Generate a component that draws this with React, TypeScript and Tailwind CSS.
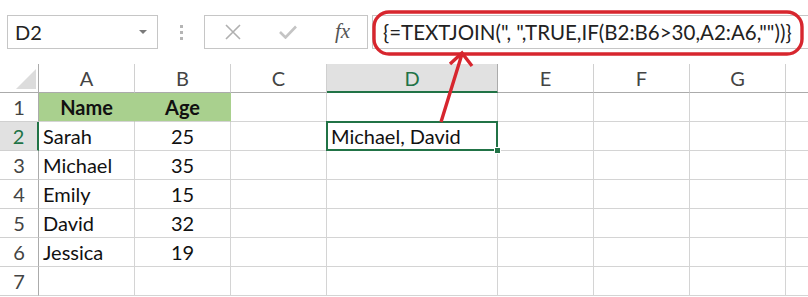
import React from "react";

const cols = [
  { key: "A", w: "w-[96px]" },
  { key: "B", w: "w-[96px]" },
  { key: "C", w: "w-[96px]" },
  { key: "D", w: "w-[171px]" },
  { key: "E", w: "w-[96px]" },
  { key: "F", w: "w-[96px]" },
  { key: "G", w: "w-[96px]" },
  { key: "", w: "w-[96px]" },
];

const data: Record<number, Record<string, string>> = {
  1: { A: "Name", B: "Age" },
  2: { A: "Sarah", B: "25", D: "Michael, David" },
  3: { A: "Michael", B: "35" },
  4: { A: "Emily", B: "15" },
  5: { A: "David", B: "32" },
  6: { A: "Jessica", B: "19" },
  7: {},
};

const Toolbar = () => (
  <div className="flex h-[64px] pt-[15px] pl-[7px]">
    <div className="flex h-[34px] w-[151px] items-center justify-between border border-[#c6c6c6] pl-[7px] pr-[10px]">
      <span className="text-[20px] text-[#222]">D2</span>
      <svg width="8" height="5" viewBox="0 0 8 5">
        <path d="M0 0H8L4 4Z" fill="#7a7a7a" />
      </svg>
    </div>
    <div className="flex w-[46px] flex-col items-center justify-center gap-[3px] h-[34px]">
      <span className="h-[3px] w-[3px] bg-[#b5b5b5]" />
      <span className="h-[3px] w-[3px] bg-[#b5b5b5]" />
      <span className="h-[3px] w-[3px] bg-[#b5b5b5]" />
    </div>
    <div className="flex h-[34px] w-[164px] items-center border border-[#c6c6c6]">
      <svg className="ml-[20px]" width="16" height="16" viewBox="0 0 16 16">
        <path d="M1 1L15 15M15 1L1 15" stroke="#b0b0b0" strokeWidth="1.6" />
      </svg>
      <svg className="ml-[38px]" width="18" height="14" viewBox="0 0 18 14">
        <path d="M1 7L6.5 12.5L17 1.5" stroke="#c4c4c4" strokeWidth="2.6" fill="none" />
      </svg>
      <span
        className="ml-[38px] text-[21px] italic text-[#555]"
        style={{ fontFamily: '"Liberation Serif", serif' }}
      >
        fx
      </span>
    </div>
    <div className="ml-[4px] flex h-[34px] flex-1 items-center border-y border-l border-[#c6c6c6] pl-[10px]">
      <span className="whitespace-pre text-[20.5px] text-[#222]">
        {'{=TEXTJOIN(", ",TRUE,IF(B2:B6>30,A2:A6,""))}'}
      </span>
    </div>
  </div>
);

const HeaderRow = () => (
  <div className="flex h-[29px]">
    <div className="relative w-[39px] shrink-0 border-r border-b border-[#ababab]">
      <svg className="absolute left-[16px] top-[5px]" width="20" height="20" viewBox="0 0 20 20">
        <path d="M20 0V20H0Z" fill="#dcdcdc" />
      </svg>
    </div>
    {cols.map((c, i) =>
      c.key === "D" ? (
        <div
          key={i}
          className={`${c.w} shrink-0 flex items-center justify-center border-r border-[#ababab] border-b-2 border-b-[#217346] bg-[#e1e1e1] text-[20px] text-[#217346]`}
        >
          {c.key}
        </div>
      ) : (
        <div
          key={i}
          className={`${c.w} shrink-0 flex items-center justify-center border-r border-b border-[#d0d0d0] border-b-[#ababab] text-[20px] text-[#444]`}
        >
          {c.key}
        </div>
      )
    )}
  </div>
);

const Row = ({ n }: { n: number }) => {
  const row = data[n];
  const selected = n === 2;
  return (
    <div className={`flex h-[29px] ${selected ? "relative z-10" : ""}`}>
      <div
        className={
          selected
            ? "w-[39px] shrink-0 flex items-center justify-center border-b border-[#d0d0d0] border-r-2 border-r-[#217346] bg-[#e1e1e1] text-[20px] text-[#217346]"
            : "w-[39px] shrink-0 flex items-center justify-center border-b border-[#d0d0d0] border-r border-r-[#ababab] text-[20px] text-[#444]"
        }
      >
        {n}
      </div>
      {cols.map((c, i) => {
        const v = c.key ? row[c.key] : undefined;
        const isHead = n === 1 && (c.key === "A" || c.key === "B");
        const isNum = c.key === "B";
        const isSel = selected && c.key === "D";
        return (
          <div
            key={i}
            className={[
              c.w,
              "shrink-0 relative flex items-center border-r border-b border-[#d4d4d4] text-[20px] text-[#111]",
              isHead ? "bg-[#a9d08e] font-bold border-r-[#a9d08e] justify-center" : "",
              !isHead && isNum ? "justify-center" : "",
              !isHead && !isNum ? "pl-[4px]" : "",
              isSel ? "z-10" : "",
            ].join(" ")}
          >
            {isSel && (
              <div className="absolute -left-[1px] -top-[1px] h-[30px] w-[172px] border-2 border-[#217346]">
                <div className="absolute -bottom-[5px] -right-[5px] h-[7px] w-[7px] border border-white bg-[#217346]" />
              </div>
            )}
            {v && <span className="relative">{v}</span>}
          </div>
        );
      })}
    </div>
  );
};

export default function App() {
  return (
    <div
      className="relative h-[297px] w-[808px] overflow-hidden bg-white"
      style={{ fontFamily: "Lato, 'Open Sans', sans-serif" }}
    >
      <Toolbar />
      <HeaderRow />
      {[1, 2, 3, 4, 5, 6, 7].map((n) => (
        <Row key={n} n={n} />
      ))}
      <svg className="pointer-events-none absolute left-0 top-0 z-20" width="808" height="297">
        <rect x="374" y="12" width="428" height="42" rx="15" fill="none" stroke="#d7262e" strokeWidth="3.4" />
        <path d="M441 122L462 54M450 64L462 53L472 66" fill="none" stroke="#d7262e" strokeWidth="3.4" />
      </svg>
    </div>
  );
}
